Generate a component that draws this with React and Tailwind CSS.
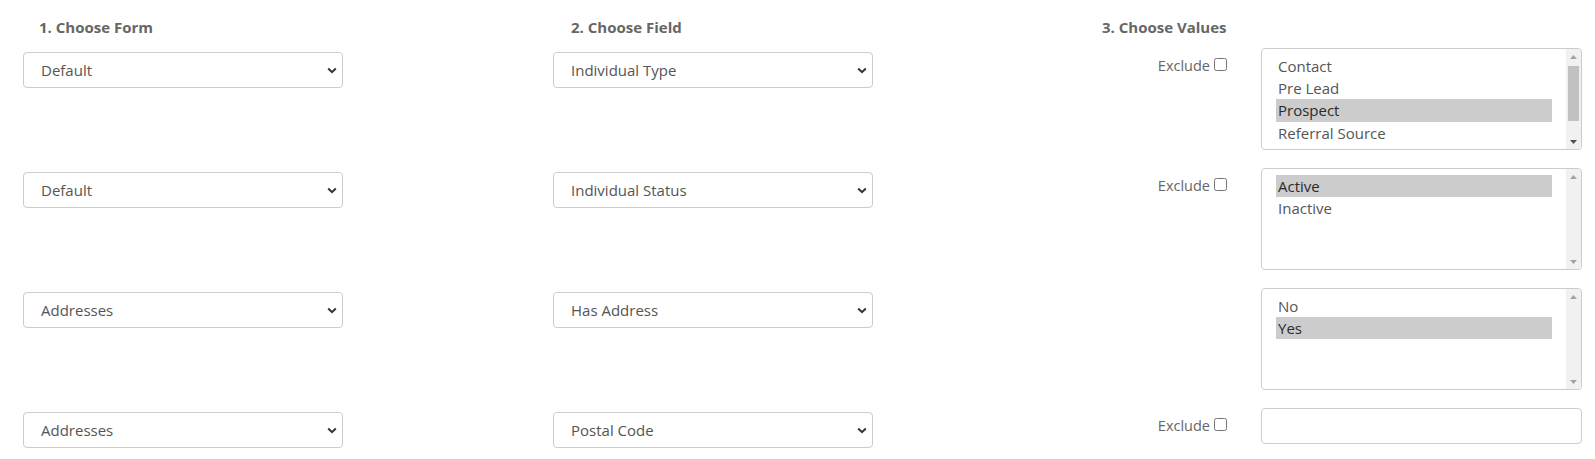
import React from 'react'

const rows = [
  { form: 'Default', field: 'Individual Type', exclude: true, options: ['Contact', 'Pre Lead', 'Prospect', 'Referral Source', 'Partner'], selected: 'Prospect', scroll: true },
  { form: 'Default', field: 'Individual Status', exclude: true, options: ['Active', 'Inactive'], selected: 'Active' },
  { form: 'Addresses', field: 'Has Address', exclude: false, options: ['No', 'Yes'], selected: 'Yes' },
  { form: 'Addresses', field: 'Postal Code', exclude: true, input: true },
]

function Dropdown({ value }) {
  return (
    <div className="relative w-[320px] h-[36px]">
      <select
        defaultValue={value}
        className="appearance-none w-full h-full rounded-[4px] border border-[#cccccc] bg-white pl-[17px] text-[15px] text-[#555555] outline-none"
      >
        <option>{value}</option>
      </select>
      {/* chevron */}
      <svg
        className="pointer-events-none absolute right-[6px] top-[15px]"
        width="10"
        height="7"
        viewBox="0 0 10 7"
      >
        <path d="M1.2 1.5 L5 5.2 L8.8 1.5" fill="none" stroke="#333333" strokeWidth="2" />
      </svg>
    </div>
  )
}

function Exclude() {
  return (
    <label className="flex items-start text-[14.5px] leading-[20px] text-[#666666]">
      Exclude
      <input type="checkbox" className="ml-[4px] mt-[2px] w-[13px] h-[13px]" />
    </label>
  )
}

function Arrow({ up, color }) {
  return (
    <div className="h-[15px] flex items-center justify-center">
      <svg width="7" height="4" viewBox="0 0 7 4">
        <polygon points={up ? '3.5,0 7,4 0,4' : '0,0 7,0 3.5,4'} fill={color} />
      </svg>
    </div>
  )
}

function ListBox({ options, selected, scroll }) {
  return (
    <div className="w-[321px] h-[102px] rounded-[4px] border border-[#cccccc] bg-white flex overflow-hidden">
      <div className="flex-1 px-[14px] pt-[6px] overflow-hidden text-[15px] leading-[22.2px] text-[#555555]">
        {options.map((o) => (
          <div key={o} className={o === selected ? 'px-[2px] bg-[#cccccc] text-[#2a2a2a]' : 'px-[2px]'}>
            {o}
          </div>
        ))}
      </div>
      {/* scrollbar */}
      <div className="w-[15px] bg-[#f1f1f1] flex flex-col">
        <Arrow up color="#a3a3a3" />
        <div className="flex-1 px-[2px] pt-[2px]">
          {scroll && <div className="h-[55px] bg-[#c1c1c1]" />}
        </div>
        <Arrow color={scroll ? '#505050' : '#a3a3a3'} />
      </div>
    </div>
  )
}

export default function App() {
  return (
    <div className="min-h-screen bg-white pl-[23px] font-['Open_Sans',sans-serif]">
      {/* headers */}
      <div className="flex h-[48px] pt-[17px] text-[15px] leading-[20px] font-bold text-[#666666]">
        <div className="w-[548px] pl-[16px]">1. Choose Form</div>
        <div className="w-[531px]">2. Choose Field</div>
        <div>3. Choose Values</div>
      </div>

      {rows.map((r, i) => (
        <div key={i} className={i < rows.length - 1 ? 'flex items-start h-[120px]' : 'flex items-start'}>
          <div className="w-[530px] pt-[4px]">
            <Dropdown value={r.form} />
          </div>
          <div className="w-[320px] pt-[4px]">
            <Dropdown value={r.field} />
          </div>
          <div className="w-[388px] flex justify-end pr-[34px] pt-[8px]">
            {r.exclude && <Exclude />}
          </div>
          {r.input ? (
            <input type="text" className="w-[321px] h-[36px] rounded-[4px] border border-[#cccccc] bg-white outline-none" />
          ) : (
            <ListBox options={r.options} selected={r.selected} scroll={r.scroll} />
          )}
        </div>
      ))}
    </div>
  )
}
